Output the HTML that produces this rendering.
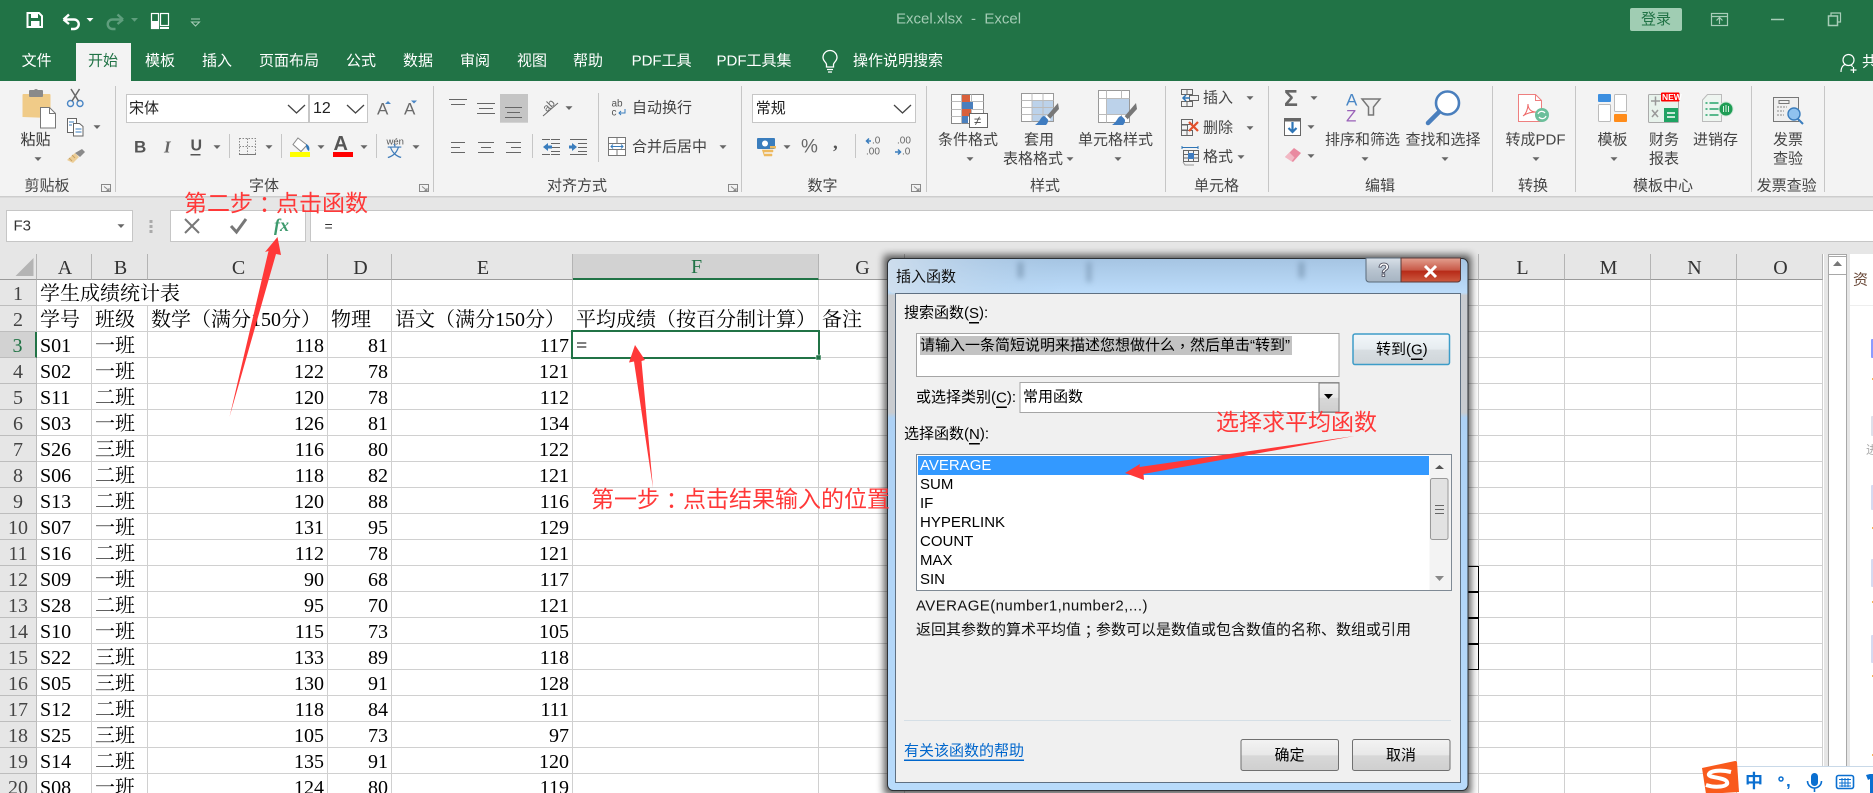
<!DOCTYPE html>
<html lang="zh-CN"><head><meta charset="utf-8"><title>Excel.xlsx - Excel</title>
<style>
html,body{margin:0;padding:0;width:1873px;height:793px;overflow:hidden;background:#fff}
#p{position:absolute;left:0;top:0;width:1873px;height:793px;overflow:hidden;background:#fff}
#tb{position:absolute;left:0;top:254px;border-collapse:separate;border-spacing:0;table-layout:fixed;width:1823px}
#tb td,#tb th{box-sizing:border-box;height:26px;padding:2px 0 0 3px;border-right:1px solid #d0d0d0;border-bottom:1px solid #d0d0d0;font:400 20px/22px "Liberation Serif","Noto Serif CJK SC",serif;white-space:nowrap;overflow:visible;color:#000;text-align:left}
#tb th{background:#e6e6e6;color:#444;text-align:center;padding:2px 0 0 0;border-bottom-color:#bdbdbd;border-right-color:#bdbdbd}
#tb tr.h th,#tb tr.h td{height:25px;background:#e6e6e6;color:#333;text-align:center;padding:2px 0 0 2px;border-bottom:1px solid #9a9a9a;border-right:1px solid #b4b4b4}
#tb tr.h th.s{background:#d2d2d2;color:#217346;border-bottom:2px solid #217346}
#tb tr.d td:nth-child(n+4):nth-child(-n+6){text-align:right;padding:2px 3px 0 0}
#tb tr.sel th{background:#d2d2d2;color:#217346;border-right:2px solid #217346}
#tb tr.b td:nth-child(9){border:1px solid #000}
svg{position:absolute;left:0;top:0}
svg text{font-family:"Liberation Sans","Noto Sans CJK SC",sans-serif;font-size:15px;dominant-baseline:central;fill:#444}
.w text{fill:#fff}
.k text{fill:#000}
.u{text-decoration:underline}
.tc{font-family:"Noto Sans CJK TC",sans-serif}
</style></head><body><div id="p">
<table id="tb"><colgroup><col style="width:37px"><col style="width:55px"><col style="width:56px"><col style="width:180px"><col style="width:64px"><col style="width:181px"><col style="width:246px"><col style="width:86px"><col style="width:574px"><col style="width:86px"><col style="width:86px"><col style="width:86px"><col style="width:86px"></colgroup>
<tr class="h"><th></th><th>A</th><th>B</th><th>C</th><th>D</th><th>E</th><th class="s">F</th><th>G</th><th>H</th><th>L</th><th>M</th><th>N</th><th>O</th></tr>
<tr><th>1</th><td colspan="3">学生成绩统计表</td><td></td><td></td><td></td><td></td><td></td><td></td><td></td><td></td><td></td></tr>
<tr><th>2</th><td>学号</td><td>班级</td><td>数学（满分150分）</td><td>物理</td><td>语文（满分150分）</td><td>平均成绩（按百分制计算）</td><td>备注</td><td></td><td></td><td></td><td></td><td></td></tr>
<tr class="d sel"><th>3</th><td>S01</td><td>一班</td><td>118</td><td>81</td><td>117</td><td>=</td><td></td><td></td><td></td><td></td><td></td><td></td></tr>
<tr class="d"><th>4</th><td>S02</td><td>一班</td><td>122</td><td>78</td><td>121</td><td></td><td></td><td></td><td></td><td></td><td></td><td></td></tr>
<tr class="d"><th>5</th><td>S11</td><td>二班</td><td>120</td><td>78</td><td>112</td><td></td><td></td><td></td><td></td><td></td><td></td><td></td></tr>
<tr class="d"><th>6</th><td>S03</td><td>一班</td><td>126</td><td>81</td><td>134</td><td></td><td></td><td></td><td></td><td></td><td></td><td></td></tr>
<tr class="d"><th>7</th><td>S26</td><td>三班</td><td>116</td><td>80</td><td>122</td><td></td><td></td><td></td><td></td><td></td><td></td><td></td></tr>
<tr class="d"><th>8</th><td>S06</td><td>二班</td><td>118</td><td>82</td><td>121</td><td></td><td></td><td></td><td></td><td></td><td></td><td></td></tr>
<tr class="d"><th>9</th><td>S13</td><td>二班</td><td>120</td><td>88</td><td>116</td><td></td><td></td><td></td><td></td><td></td><td></td><td></td></tr>
<tr class="d"><th>10</th><td>S07</td><td>一班</td><td>131</td><td>95</td><td>129</td><td></td><td></td><td></td><td></td><td></td><td></td><td></td></tr>
<tr class="d"><th>11</th><td>S16</td><td>二班</td><td>112</td><td>78</td><td>121</td><td></td><td></td><td></td><td></td><td></td><td></td><td></td></tr>
<tr class="d b"><th>12</th><td>S09</td><td>一班</td><td>90</td><td>68</td><td>117</td><td></td><td></td><td></td><td></td><td></td><td></td><td></td></tr>
<tr class="d b"><th>13</th><td>S28</td><td>二班</td><td>95</td><td>70</td><td>121</td><td></td><td></td><td></td><td></td><td></td><td></td><td></td></tr>
<tr class="d b"><th>14</th><td>S10</td><td>一班</td><td>115</td><td>73</td><td>105</td><td></td><td></td><td></td><td></td><td></td><td></td><td></td></tr>
<tr class="d b"><th>15</th><td>S22</td><td>三班</td><td>133</td><td>89</td><td>118</td><td></td><td></td><td></td><td></td><td></td><td></td><td></td></tr>
<tr class="d"><th>16</th><td>S05</td><td>三班</td><td>130</td><td>91</td><td>128</td><td></td><td></td><td></td><td></td><td></td><td></td><td></td></tr>
<tr class="d"><th>17</th><td>S12</td><td>二班</td><td>118</td><td>84</td><td>111</td><td></td><td></td><td></td><td></td><td></td><td></td><td></td></tr>
<tr class="d"><th>18</th><td>S25</td><td>三班</td><td>105</td><td>73</td><td>97</td><td></td><td></td><td></td><td></td><td></td><td></td><td></td></tr>
<tr class="d"><th>19</th><td>S14</td><td>二班</td><td>135</td><td>91</td><td>120</td><td></td><td></td><td></td><td></td><td></td><td></td><td></td></tr>
<tr class="d"><th>20</th><td>S08</td><td>一班</td><td>124</td><td>80</td><td>119</td><td></td><td></td><td></td><td></td><td></td><td></td><td></td></tr>
</table>
<svg width="1873" height="793" viewBox="0 0 1873 793" xmlns="http://www.w3.org/2000/svg">
<defs>
<path id="d" d="M-3.5-1.8h7l-3.5 3.8z" fill="#666"/>
<path id="c" d="M0 0l8.5 8 8.5-8" stroke="#444" stroke-width="1.3" fill="none"/>
<linearGradient id="fr" gradientUnits="userSpaceOnUse" x1="0" y1="258" x2="0" y2="791"><stop offset="0" stop-color="#a5c4e2"/><stop offset=".065" stop-color="#bcdcfa"/><stop offset=".07" stop-color="#c9ccd0"/><stop offset=".29" stop-color="#c9ccd0"/><stop offset=".3" stop-color="#add1f5"/><stop offset="1" stop-color="#b8dbfb"/></linearGradient>
<linearGradient id="tl" x1="0" x2="1" y1="0" y2="0"><stop offset="0" stop-color="#d2e0ee" stop-opacity=".9"/><stop offset=".3" stop-color="#b0cde8" stop-opacity="0"/></linearGradient>
<linearGradient id="btn" x1="0" x2="0" y1="0" y2="1"><stop offset="0" stop-color="#f3f3f3"/><stop offset=".5" stop-color="#e8e8e8"/><stop offset=".52" stop-color="#d8d8d8"/><stop offset="1" stop-color="#cfcfcf"/></linearGradient>
<linearGradient id="btn2" x1="0" x2="0" y1="0" y2="1"><stop offset="0" stop-color="#f2f7fa"/><stop offset=".5" stop-color="#e6ecf0"/><stop offset=".52" stop-color="#d8dee2"/><stop offset="1" stop-color="#cfd5d9"/></linearGradient>
<linearGradient id="cl" x1="0" x2="0" y1="0" y2="1"><stop offset="0" stop-color="#e3a090"/><stop offset=".5" stop-color="#c85a48"/><stop offset=".55" stop-color="#b82a18"/><stop offset="1" stop-color="#cc5a40"/></linearGradient>
<linearGradient id="hp" x1="0" x2="0" y1="0" y2="1"><stop offset="0" stop-color="#d8e0e8"/><stop offset=".5" stop-color="#b8c4d0"/><stop offset="1" stop-color="#a6b4c2"/></linearGradient>
<filter id="b4" x="-10%" y="-10%" width="120%" height="120%"><feGaussianBlur stdDeviation="4"/></filter>
<filter id="b3" x="-100%" y="-100%" width="300%" height="300%"><feGaussianBlur stdDeviation="3"/></filter>
</defs>

<!-- top chrome -->
<rect width="1873" height="81" fill="#217346"/>
<rect y="81" width="1873" height="116" fill="#f3f3f3"/>
<rect y="196" width="1873" height="58" fill="#e6e6e6"/>
<rect y="196" width="1873" height="1.5" fill="#cdcdcd"/>
<rect x="76" y="43" width="55" height="38" fill="#f3f3f3"/>

<!-- QAT -->
<g fill="none" stroke="#fff">
<path d="M27.5 13h11.5l3 3v11h-14.500z" stroke-width="2"/>
<path d="M31 12.500h7v5.500h-7zM31 21h8.500v7h-8.500z" fill="#fff" stroke="none"/>
<path d="M63.500 19.500l5.500-5M63.500 19.500l5.500 4.500M64 19.500h10a4.700 4.700 0 0 1 0 9.500h-3" stroke-width="2.400"/>
<path d="M123 19.500l-5.500-5M123 19.500l-5.500 4.500M122.500 19.500h-10a4.700 4.700 0 0 0 0 9.500h3" stroke-width="2.400" stroke="#5f9e7d"/>
<rect x="151.500" y="13.500" width="7" height="15" stroke-width="1.200"/>
<rect x="160.500" y="13.500" width="8" height="12" stroke-width="1.200"/>
<path d="M151 21h8v8h-8zM160 27h9v2h-9z" fill="#fff" stroke="none"/>
<path d="M191 19h9M191.500 22l4 4 4-4z" stroke="#a8cdb8"/>
<path d="M90 18h7l-3.500 3.800z" transform="translate(-3.500 0)" fill="#fff" stroke="none"/>
<path d="M131 18h7l-3.500 3.800z" fill="#5f9e7d" stroke="none"/>
</g>
<text x="896" y="19" style="fill:#a3cbb4;font-size:15px" xml:space="preserve">Excel.xlsx  -  Excel</text>
<rect x="1630" y="8" width="52" height="23" rx="2" fill="#a0cdb3"/>
<text x="1641" y="19.500" style="fill:#217346">登录</text>
<g fill="none" stroke="#a8cdb8" stroke-width="1.200">
<rect x="1711.500" y="13.500" width="16" height="12"/><path d="M1711.500 16.500h16M1719.500 24v-6M1716.500 20.500l3-3 3 3"/>
<path d="M1771 19.500h13" stroke-width="1.500"/>
<rect x="1828.500" y="16" width="9" height="9.500" stroke-width="1.500"/><path d="M1831 15.500v-2.500h9.500v9h-2.500" stroke-width="1.200"/>
</g>
<g fill="none" stroke="#fff" stroke-width="1.200"><circle cx="1848.500" cy="60" r="5.500"/><path d="M1841 72c0-5 2.500-7.500 5-7.500M1851 65.500l2 1M1853.500 67v6M1850.500 70h6"/></g>
<g class="w"><text x="1862" y="62">共</text>
<text x="21.600" y="61">文件</text>
<text x="88" y="61" style="fill:#217346">开始</text>
<text x="145" y="61">模板</text><text x="202" y="61">插入</text><text x="259" y="61">页面布局</text><text x="346" y="61">公式</text><text x="403" y="61">数据</text><text x="460" y="61">审阅</text><text x="517" y="61">视图</text><text x="573" y="61">帮助</text><text x="631.600" y="61">PDF工具</text><text x="716.500" y="61">PDF工具集</text><text x="853" y="61">操作说明搜索</text></g>
<g fill="none" stroke="#fff" stroke-width="1.300"><path d="M826.500 67v-2.500c0-2-3.500-3.500-3.500-7a6.800 6.800 0 0 1 14 0c0 3.500-3.500 5-3.500 7V67zM827 69.500h6M828 72h4"/></g>

<!-- group separators -->
<g stroke="#c6c6c6" stroke-width="1"><path d="M115.500 86v106M433.500 86v106M741.500 86v106M926.500 86v106M1165.500 86v106M1268.500 86v106M1492.500 86v106M1575.500 86v106M1751.500 86v106M1824.500 86v106M598.500 93v69M229.500 134v24M281.500 134v24M376.500 134v24M532.500 134v24M855.500 134v24"/></g>
<g>
<text x="24.500" y="186">剪贴板</text><text x="249" y="186">字体</text><text x="547" y="186">对齐方式</text><text x="807.500" y="186">数字</text><text x="1030" y="186">样式</text><text x="1194" y="186">单元格</text><text x="1365" y="186">编辑</text><text x="1518" y="186">转换</text><text x="1633" y="186">模板中心</text><text x="1756.600" y="186">发票查验</text>
</g>
<g fill="none" stroke="#888"><path d="M101.500 184.500h9v7h-9zM104 186.500l5 4M109 188v2.500h-2.500"/><path d="M419.500 184.500h9v7h-9zM422 186.500l5 4M427 188v2.500h-2.500"/><path d="M728.500 184.500h9v7h-9zM731 186.500l5 4M736 188v2.500h-2.500"/><path d="M911.500 184.500h9v7h-9zM914 186.500l5 4M919 188v2.500h-2.500"/></g>

<!-- clipboard -->
<path d="M22.500 117V95a1 1 0 0 1 1-1h26a1 1 0 0 1 1 1v22a1 1 0 0 1-1 1z" fill="#f0cb88"/>
<rect x="29" y="90" width="14" height="7" rx="1" fill="#8a8a8a"/><circle cx="36" cy="91" r="2" fill="#8a8a8a"/>
<path d="M40.500 128v-20.500h9l6 6v14.500z" fill="#fff" stroke="#777"/>
<path d="M49.500 107.500v6h6" fill="none" stroke="#777"/>
<text x="20.500" y="140" style="fill:#333">粘贴</text>
<use href="#d" x="38" y="159"/>
<g fill="none"><circle cx="70.500" cy="103.500" r="3" stroke="#4a86c5" stroke-width="1.400"/><circle cx="80" cy="103.500" r="3" stroke="#4a86c5" stroke-width="1.400"/><path d="M72 101l7.500-12M78.500 101l-7.500-12" stroke="#666" stroke-width="1.500"/></g>
<g fill="#fff" stroke="#666"><path d="M67.500 118.500h9v14h-9z"/><path d="M73.500 123.500h6l3.500 3v9.500h-9.500z"/></g><path d="M69 122h5M69 125h3M75.500 129h6M75.500 132h6" stroke="#3a7dbd"/>
<use href="#d" x="97" y="127"/>
<path d="M67 160l8-7 4 4-6 6z" fill="#eccd96"/><path d="M75 153l7-4 3 3-5 5z" fill="#8a8a8a"/><path d="M69 158l3 3M72 155l3 3" stroke="#c7a266"/>

<!-- font boxes -->
<rect x="126.500" y="94.500" width="182" height="28" fill="#fff" stroke="#c6c6c6"/>
<rect x="309.500" y="94.500" width="58" height="28" fill="#fff" stroke="#c6c6c6"/>
<text x="129" y="108.500" style="fill:#222">宋体</text><text x="313" y="108.500" style="fill:#222;font-size:16px">12</text>
<use href="#c" x="288" y="105"/><use href="#c" x="347" y="105"/>
<text x="377" y="109" style="font-size:17px;fill:#6a6a6a">A</text><text x="404" y="109" style="font-size:17px;fill:#6a6a6a">A</text>
<path d="M385 104h6l-3-3zM411 100.500h6l-3 3z" fill="#4a86c5"/>
<text x="134" y="147" style="font-size:17px;font-weight:700;fill:#555">B</text>
<text x="164" y="147" style="font-size:17px;font-style:italic;font-family:'Liberation Serif';font-weight:700;fill:#666">I</text>
<text x="190.500" y="146" style="font-size:16px;font-weight:700;fill:#555">U</text><rect x="190.500" y="154" width="10" height="1.500" fill="#555"/>
<use href="#d" x="217" y="147"/><use href="#d" x="269" y="147"/><use href="#d" x="321" y="147"/><use href="#d" x="364" y="147"/><use href="#d" x="416" y="147"/>
<path d="M239.500 138.500h16v16h-16zM247.500 138.500v16M239.500 146.500h16" fill="none" stroke="#888" stroke-dasharray="1.500 1.500"/><path d="M239 154.500h17" stroke="#777"/>
<path d="M298 138l9 7-6 6.500-8-7z" fill="#fff" stroke="#888"/><path d="M306 144c3 1 4 4 3 7-2-1-3-3-3-7z" fill="#2e75b6"/>
<rect x="290" y="152" width="20" height="5" fill="#ff0"/>
<text x="333.500" y="144" style="font-size:20px;font-weight:700;fill:#555">A</text><rect x="333" y="152" width="20" height="5" fill="#f00"/>
<text x="386.500" y="142" style="font-size:9.500px;fill:#555">wén</text><text x="387" y="152" style="font-size:15px;fill:#3d7ab8">文</text>

<!-- align -->
<rect x="500" y="94" width="28" height="28.700" fill="#c5c5c5"/>
<g stroke="#666" fill="none"><path d="M449 99.500h18M451 104.500h14M477 103.500h18M479 108.500h14M477 113.500h18M505 107.500h17M507 112.500h13M505 117.500h17M451 142.500h14M451 147.500h9M451 152.500h14M478 142.500h16M481 147.500h10M478 152.500h16M506 142.500h15M511 147.500h10M506 152.500h15M551 139.500h9M551 143.500h9M551 147.500h9M551 151.500h9M551 154.500h9M578 139.500h9M578 143.500h9M578 147.500h9M578 151.500h9M578 154.500h9M542 139.500h8M542 154.500h8M570 139.500h8M570 154.500h8"/></g>
<path d="M543 147l5-4v2.500h4v3h-4v2.500zM577 147l-5-4v2.500h-3v3h3v2.500z" fill="#3a7dbd"/>
<text x="543" y="106" transform="rotate(-45 549 106)" style="font-size:11px;fill:#666">ab</text><path d="M543 116l15-13" stroke="#666" fill="none"/>
<use href="#d" x="569" y="108"/>
<text x="611.500" y="104" style="font-size:10px;fill:#555">ab</text><text x="611.500" y="113" style="font-size:10px;fill:#555">c</text><path d="M625 109v4h-6M621 111l-2 2 2 2" fill="none" stroke="#3a7dbd"/>
<text x="632" y="108">自动换行</text>
<rect x="608.500" y="137.500" width="17" height="18" fill="#fff" stroke="#777"/><path d="M608.500 143.500h17M608.500 149.500h17M617 137.500v6M617 149.500v6" stroke="#777"/><rect x="609" y="144" width="16" height="5" fill="#fff"/><path d="M611 146.500h12M613 144.500l-2 2 2 2M621 144.500l2 2-2 2" fill="none" stroke="#3a7dbd"/>
<text x="632" y="147">合并后居中</text><use href="#d" x="723" y="147"/>

<!-- number -->
<rect x="752.500" y="94.500" width="163" height="28" fill="#fff" stroke="#c6c6c6"/>
<text x="755.700" y="108.500" style="fill:#222">常规</text><use href="#c" x="894" y="105"/>
<rect x="757" y="138" width="18" height="11" rx="1" fill="#3a7dbd"/><circle cx="765" cy="143.500" r="3" fill="#fff"/><path d="M762 150h11v2h-9v2h8v2h-8" fill="#edb95e" stroke="#edb95e" stroke-width=".5"/><rect x="770" y="146" width="6" height="2.500" fill="#edb95e"/>
<use href="#d" x="787" y="147"/>
<text x="801" y="147" style="font-size:19px;fill:#666">%</text><text x="833" y="143" style="font-size:19px;font-weight:700;font-family:'Liberation Serif';fill:#555">,</text>
<text x="872" y="141" style="font-size:10px;fill:#666">.0</text><text x="866" y="152" style="font-size:10px;fill:#666">.00</text><path d="M871 141h-4M869 138.500l-2.500 2.500 2.500 2.500" stroke="#3a7dbd" stroke-width="1.500" fill="none"/>
<text x="897" y="141" style="font-size:10px;fill:#666">.00</text><text x="902" y="152" style="font-size:10px;fill:#666">.0</text><path d="M895 152h5M898 149.500l2.500 2.500-2.500 2.500" stroke="#3a7dbd" stroke-width="1.500" fill="none"/>

<!-- styles -->
<rect x="951.500" y="94.500" width="32" height="29" fill="#fff" stroke="#888"/><path d="M951.500 101.500h32M951.500 109.500h32M951.500 116.500h32M961.500 94.500v29M971.500 94.500v29" stroke="#bbb" fill="none"/>
<rect x="962" y="95" width="8" height="7" fill="#d9603b"/><rect x="962" y="102" width="11" height="7" fill="#4a7fbd"/><rect x="962" y="109" width="9" height="7" fill="#d9603b"/><rect x="962" y="116" width="6" height="7" fill="#4a7fbd"/>
<rect x="969.500" y="113.500" width="18" height="14" fill="#fff" stroke="#666"/><text x="974" y="120.500" style="font-size:13px;fill:#444">≠</text>
<text x="938" y="140">条件格式</text><use href="#d" x="970" y="159"/>
<rect x="1021.500" y="93.500" width="32" height="28" fill="#fff" stroke="#999"/><rect x="1032" y="100" width="21" height="21" fill="#bcd2ea"/><path d="M1021.500 100.500h32M1021.500 107.500h32M1021.500 114.500h32M1032 93.500v28M1043 93.500v28" stroke="#bbb" fill="none"/>
<path d="M1058 103l-12 14 3 3 10-11z" fill="#777"/><path d="M1044 116c-4 1-3 5-9 9h11c3-3 3-7-2-9z" fill="#3f7cc0"/><path d="M1046 116l4 4" stroke="#fff" stroke-width="2"/>
<text x="1024" y="140">套用</text><text x="1003" y="159">表格格式</text><use href="#d" x="1070" y="159"/>
<rect x="1098.500" y="90.500" width="31" height="32" fill="#fff" stroke="#999"/><path d="M1098.500 98.500h31M1098.500 114.500h31M1106.500 90.500v32M1121.500 90.500v32" stroke="#bbb" fill="none"/><rect x="1107" y="99" width="22" height="15" fill="#bcd2ea"/>
<path d="M1136 103l-12 14 3 3 10-11z" fill="#777"/><path d="M1121 116c-4 1-3 5-9 9h11c3-3 3-7-2-9z" fill="#3f7cc0"/><path d="M1123 116l4 4" stroke="#fff" stroke-width="2"/>
<text x="1078" y="140">单元格样式</text><use href="#d" x="1118" y="159"/>

<!-- cells -->
<g fill="none" stroke="#666">
<path d="M1181.500 89.500h11v5h-11zM1181.500 101.500h11v5h-11zM1187 89.500v5M1187 101.500v5M1189.500 95.500h9v5h-9z"/>
<path d="M1181.500 119.500h11v5h-11zM1181.500 130.500h11v5h-11zM1187 130.500v5M1181.500 125h6v5h-6z"/>
<path d="M1183.500 150.500h15v11h-15zM1183.500 154.500h15M1183.500 158h15M1188.500 150.500v11M1193.500 150.500v11"/>
<path d="M1183 162l2 3h9" stroke="#999"/>
</g>
<path d="M1190 98h-7M1186 95l-3 3 3 3" fill="none" stroke="#2e75b6" stroke-width="1.500"/>
<path d="M1189 122l9 9M1198 122l-9 9" stroke="#e2512c" stroke-width="2.200"/>
<path d="M1182 147.500h16M1182 146v3M1198 146v3" stroke="#2e75b6"/><rect x="1188" y="153" width="6" height="6" fill="#3f7cc0"/>
<text x="1203" y="98">插入</text><use href="#d" x="1250" y="98"/>
<text x="1203" y="128">删除</text><use href="#d" x="1250" y="128"/>
<text x="1203" y="157">格式</text><use href="#d" x="1241" y="157"/>

<!-- edit -->
<text x="1284" y="98" style="font-size:23px;font-weight:700;fill:#666">Σ</text><use href="#d" x="1314" y="98"/>
<rect x="1284.500" y="118.500" width="16" height="17" fill="#fff" stroke="#666"/><rect x="1284.500" y="118.500" width="16" height="3" fill="#666"/><path d="M1292.500 122v9M1288.500 128l4 4 4-4" fill="none" stroke="#2e75b6" stroke-width="2.200"/><use href="#d" x="1311" y="127"/>
<path d="M1285 157l9-9 7 5-8 9z" fill="#e98aa0"/><path d="M1285 157l4.500-4.500 5 5-3 4z" fill="#f2b8c4"/><use href="#d" x="1311" y="156"/>
<text x="1346" y="100" style="font-size:17px;fill:#4a86c5">A</text><text x="1346" y="116" style="font-size:17px;fill:#9a62b8">Z</text>
<path d="M1362 99h18l-6.500 8v8h-5v-8z" fill="#eee" stroke="#777" stroke-width="1.500"/>
<text x="1325" y="140">排序和筛选</text><use href="#d" x="1365" y="159"/>
<circle cx="1447.500" cy="103" r="11.500" fill="#fff" stroke="#4a7fbd" stroke-width="2.600"/><path d="M1439 112l-11 11" stroke="#4a7fbd" stroke-width="4.500" stroke-linecap="round"/>
<text x="1405.500" y="140">查找和选择</text><use href="#d" x="1445" y="159"/>

<!-- convert / template / invoice -->
<path d="M1518.500 94.500h17l6 6v21h-23z" fill="#fff" stroke="#ee7f7f"/><path d="M1535.500 94.500v6h6" fill="none" stroke="#ee7f7f"/><path d="M1523 116c3-2 5-7 5-12 0 5 3 8 8 8-5 0-9 1-13 4z" fill="none" stroke="#e66"/>
<circle cx="1542" cy="115" r="7" fill="#6cbf9b"/><path d="M1538 114a4 4 0 0 1 7-1M1546 116a4 4 0 0 1-7 1" fill="none" stroke="#fff" stroke-width="1.200"/>
<text x="1505.500" y="140">转成PDF</text><use href="#d" x="1536" y="159"/>
<rect x="1598" y="94" width="13" height="8" rx="1" fill="#3c8fe0"/><rect x="1614.500" y="94.500" width="12" height="17" rx="1" fill="#fff" stroke="#bbb"/><rect x="1598.500" y="104.500" width="12" height="17" rx="1" fill="#fff" stroke="#bbb"/><rect x="1614" y="114" width="13" height="8" rx="1" fill="#ff8c1a"/>
<text x="1597.500" y="140">模板</text><use href="#d" x="1614" y="159"/>
<rect x="1648.500" y="94.500" width="30" height="28" rx="1" fill="#e8f3ec" stroke="#aaa"/><path d="M1651 101h9M1655.500 96.500v9M1652 110l6 7M1658 110l-6 7" stroke="#999" stroke-width="1.500"/><rect x="1664" y="108" width="14" height="14" fill="#1fa363"/><path d="M1667 113h8M1667 117h8" stroke="#fff" stroke-width="1.500"/>
<rect x="1661" y="92.500" width="18.500" height="9" rx="1" fill="#f00"/><text x="1662" y="97.200" style="font-size:8.500px;font-weight:700;fill:#fff">NEW</text>
<text x="1649" y="140">财务</text><text x="1649" y="159">报表</text>
<path d="M1702.500 100l5-5.500h14v27h-19z" fill="#eef5f0" stroke="#bbb"/><path d="M1705.500 103h2M1709.500 103h9M1705.500 109h2M1709.500 109h9M1705.500 115h2M1709.500 115h9" stroke="#25a56a" stroke-width="1.500"/><circle cx="1726" cy="109" r="7" fill="#1f9d55" stroke="#cfe6d8"/><path d="M1723.500 106v6M1726 105v7M1728.500 106v6" stroke="#d9f0e2"/>
<text x="1693" y="140">进销存</text>
<rect x="1773.500" y="97.500" width="25" height="24" fill="#efefef" stroke="#777"/><rect x="1779" y="100.500" width="10" height="3" fill="none" stroke="#777"/><path d="M1777 107h10M1777 111h7M1777 115h7" stroke="#888" stroke-dasharray="2 1"/><circle cx="1794" cy="114" r="6" fill="#8fc2ef" stroke="#3a7dbd" stroke-width="1.400"/><path d="M1798 119l5 5" stroke="#3a7dbd" stroke-width="2"/>
<text x="1773" y="140">发票</text><text x="1773" y="159">查验</text>

<!-- formula bar -->
<rect x="6.500" y="210.500" width="126" height="31" fill="#fff" stroke="#c6c6c6"/>
<text x="13.500" y="226" style="fill:#333;font-size:15px">F3</text><use href="#d" x="121" y="226"/>
<path d="M151 220v3M151 225v3M151 230v3" stroke="#aaa" stroke-width="3"/>
<rect x="170.500" y="210.500" width="135" height="31" fill="#fff" stroke="#c6c6c6"/>
<rect x="310.500" y="210.500" width="1563" height="31" fill="#fff" stroke="#c6c6c6"/>
<path d="M185 219l14 14M199 219l-14 14" stroke="#777" stroke-width="2"/>
<path d="M231 226l5.500 6 9.500-13" fill="none" stroke="#777" stroke-width="3"/>
<text x="274" y="225" style="font-family:'Liberation Serif';font-style:italic;font-weight:700;font-size:18px;fill:#3d9a6d">fx</text>
<text x="324.500" y="226" style="fill:#333;font-size:14px">=</text>

<!-- sheet extras -->
<path d="M33.500 258v18h-18z" fill="#b4b4b4"/>
<rect x="1824" y="254" width="26" height="539" fill="#e6e6e6"/>
<rect x="1828.500" y="254.500" width="18" height="538.500" fill="#fff" stroke="#a8a8a8"/>
<rect x="1828.500" y="256.500" width="18" height="18" fill="#fff" stroke="#a8a8a8"/><path d="M1833 266h9l-4.500-5z" fill="#777"/>
<rect x="1850" y="254" width="23" height="539" fill="#fff"/><path d="M1850 305.500h23" stroke="#eee"/>
<text x="1853" y="280" style="font-size:15px;fill:#6a4a3a">资</text>
<text x="1866" y="450" style="font-size:12px;fill:#aaa">进</text>
<rect x="1871" y="339" width="4" height="19" rx="1" fill="#8a9bff"/><rect x="1871" y="416" width="4" height="20" rx="1" fill="#dde0ea"/><rect x="1871" y="485" width="4" height="25" rx="1" fill="#d5daf0"/><rect x="1871" y="559" width="4" height="28" rx="1" fill="#d5daf0"/><rect x="1871" y="635" width="4" height="28" rx="1" fill="#d5daf0"/>
<g fill="#f5b45a"><rect x="1872" y="378" width="1" height="2"/><rect x="1872" y="527" width="1" height="2"/><rect x="1872" y="601" width="1" height="2"/><rect x="1872" y="675" width="1" height="2"/><rect x="1872" y="754" width="1" height="2"/></g>

<!-- selection -->
<rect x="572" y="331" width="247" height="27" fill="none" stroke="#217346" stroke-width="2"/>
<rect x="816" y="355" width="5" height="5" fill="#217346" stroke="#fff" stroke-width=".5"/>

<!-- dialog -->
<rect x="884" y="255" width="587" height="540" fill="#000" opacity=".65" filter="url(#b4)"/>
<rect x="887.500" y="258.500" width="580.500" height="532" rx="6" fill="url(#fr)" stroke="#2d3135"/>
<rect x="888" y="259" width="579" height="34" rx="6" fill="url(#tl)"/>
<g fill="#6f8ca8" opacity=".7" filter="url(#b3)"><rect x="1018" y="262" width="5" height="16"/><rect x="1087" y="262" width="4" height="20"/><rect x="1299" y="262" width="5" height="16"/></g>
<rect x="895.500" y="293.500" width="565" height="489" fill="#f0f0f0" stroke="#5f7082"/>
<text x="896" y="277" style="fill:#111">插入函数</text>
<path d="M1366 258h35v24h-32a3 3 0 0 1-3-3z" fill="url(#hp)" stroke="#5a6a7a"/>
<path d="M1401 258h59.500v21a3 3 0 0 1-3 3h-56.500z" fill="url(#cl)" stroke="#5a3a38"/>
<text x="1378" y="271" style="font-size:19px;font-weight:700;fill:#fff;stroke:#445;stroke-width:.8px">?</text>
<path d="M1425 266l11 11M1436 266l-11 11" stroke="#fff" stroke-width="3"/>
<g class="k">
<text x="904" y="313">搜索函数(<tspan class="u">S</tspan>):</text>
<rect x="916.500" y="333.500" width="422.500" height="43" fill="#fff" stroke="#a5a5a5"/>
<rect x="920" y="336" width="372" height="19" fill="#c3c3c3"/>
<text x="920" y="345.500">请输入一条简短说明来描述您想做什么<tspan class="tc" lang="zh-TW">，</tspan>然后单击“转到”</text>
<rect x="1353" y="334" width="96.500" height="30.500" rx="2" fill="url(#btn2)" stroke="#3d9cc8" stroke-width="1.500"/>
<text x="1376" y="349.500">转到(<tspan class="u">G</tspan>)</text>
<text x="916" y="397.500">或选择类别(<tspan class="u">C</tspan>):</text>
<rect x="1020" y="382.500" width="319" height="30" fill="#fff" stroke="#a5a5a5"/>
<text x="1023" y="397">常用函数</text>
<rect x="1319" y="383" width="20" height="29" fill="url(#btn)" stroke="#777"/><path d="M1324 394h9l-4.500 5z" fill="#000"/>
<text x="904" y="434">选择函数(<tspan class="u">N</tspan>):</text>
<rect x="916.500" y="454.500" width="535" height="136" fill="#fff" stroke="#7f8a95"/>
<rect x="918" y="456" width="511" height="19" fill="#3399ff"/>
<text x="920" y="465.500" style="fill:#fff">AVERAGE</text>
<text x="920" y="484.500">SUM</text><text x="920" y="503.500">IF</text><text x="920" y="522.500">HYPERLINK</text><text x="920" y="541.500">COUNT</text><text x="920" y="560.500">MAX</text><text x="920" y="579.500">SIN</text>
<rect x="1429.500" y="455" width="21.500" height="135" fill="#f3f3f3"/>
<path d="M1435 469h9l-4.500-4z" fill="#555"/><path d="M1435 576h9l-4.500 5z" fill="#888"/>
<rect x="1430.500" y="478.500" width="17.500" height="61" rx="2" fill="#e2e2e2" stroke="#999"/><path d="M1435 505.500h9M1435 509.500h9M1435 513.500h9" stroke="#666"/>
<text x="916" y="606" style="fill:#111;letter-spacing:.4px">AVERAGE(number1,number2,...)</text>
<text x="916" y="630" style="fill:#111">返回其参数的算术平均值<tspan class="tc" lang="zh-TW">；</tspan>参数可以是数值或包含数值的名称、数组或引用</text>
<path d="M904 720.500h547" stroke="#d5dfe6"/>
<text x="904" y="751" class="u" style="fill:#0066cc">有关该函数的帮助</text>
<rect x="1241" y="739.500" width="97.500" height="31" rx="2" fill="url(#btn)" stroke="#707070"/><text x="1274.500" y="755.500">确定</text>
<rect x="1352.500" y="739.500" width="97.500" height="31" rx="2" fill="url(#btn)" stroke="#707070"/><text x="1386" y="755.500">取消</text>
</g>

<!-- annotations -->
<g fill="#ff3838">
<path d="M277.500 237l3.500 18-5-1-46.500 163 39-166-3.500 1z"/>
<path d="M635 345l10 15-3.500 1 11.500 127-19-126.500-5 1z"/>
<path d="M1125 473l15-9-.5 3 215-31-211 38 .5 6z"/>
</g>
<text x="184" y="203" style="font-size:23px;fill:#ff3838">第二步<tspan class="tc" lang="zh-TW">：</tspan>点击函数</text>
<text x="591" y="499" style="font-size:23px;fill:#ff3838">第一步<tspan class="tc" lang="zh-TW">：</tspan>点击结果输入的位置</text>
<text x="1216" y="422" style="font-size:23px;fill:#ff3838">选择求平均函数</text>

<!-- IME -->
<rect x="1737" y="766" width="136" height="27" fill="#fff"/><path d="M1737 766.500h136" stroke="#c9d9e8"/>
<path d="M1702 768l33-7a2 2 0 0 1 2 1l2 30-33 2z" fill="#f95a1c"/>
<path d="M1731 772c-8-2-20-2-22 2s16 3 18 8-12 6-21 3" fill="none" stroke="#fff" stroke-width="4"/>
<text x="1745" y="781.500" style="font-size:18px;font-weight:700;fill:#0a6fd0">中</text>
<circle cx="1781" cy="779" r="2" fill="none" stroke="#0a6fd0" stroke-width="1.500"/>
<text x="1786" y="781" style="font-size:17px;font-weight:700;fill:#0a6fd0">,</text>
<rect x="1811" y="773" width="7" height="13" rx="3.500" fill="#0a6fd0"/><path d="M1807.500 781a7 7 0 0 0 14 0M1814.500 788v4" fill="none" stroke="#0a6fd0" stroke-width="1.600"/>
<rect x="1836.500" y="775.500" width="17" height="13" rx="2" fill="#fff" stroke="#0a6fd0" stroke-width="1.600"/><path d="M1839 779.500h12M1839 783h12M1839 786h12M1842 778v9M1845 778v9M1848 778v9" stroke="#0a6fd0"/>
<path d="M1866 775l4-1h3v19h-3v-14l-2 1z" fill="#0a6fd0"/>
</svg>
</div></body></html>
